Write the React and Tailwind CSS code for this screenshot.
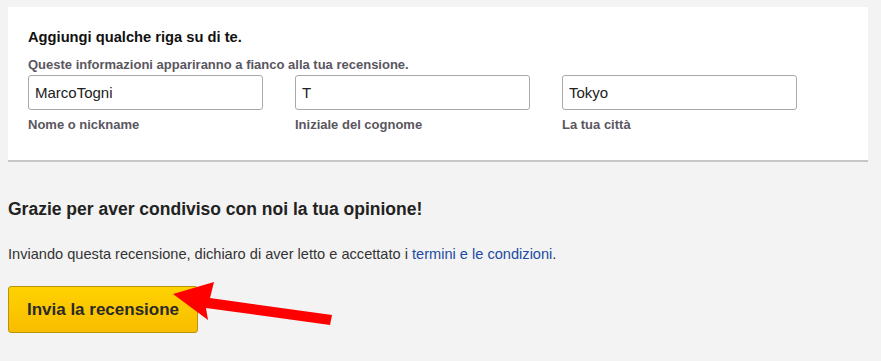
import React from 'react';

const fields = [
  { value: 'MarcoTogni', label: 'Nome o nickname' },
  { value: 'T', label: 'Iniziale del cognome' },
  { value: 'Tokyo', label: 'La tua città' },
];

const App = () => {
  return (
    <div className="relative min-h-[361px] bg-[#f3f3f3] px-2 pt-[7px] font-['Liberation_Sans',Arial,sans-serif]">
      {/* Card */}
      <div className="w-[860px] bg-white border-b-2 border-[#c6c6c6] pl-5 pt-[21px] pb-[27px]">
        <h2 className="text-[14.7px] leading-[18px] font-bold text-[#111]">Aggiungi qualche riga su di te.</h2>
        <p className="mt-[11px] text-[13px] leading-4 font-bold text-[#5a5660]">
          Queste informazioni appariranno a fianco alla tua recensione.
        </p>
        <div className="mt-[2px] flex gap-8">
          {fields.map((f, idx) => (
            <div key={idx} className="w-[235px]">
              <input
                defaultValue={f.value}
                className="h-[35px] w-full rounded-[3px] border border-[#a9a9a9] bg-white px-[6px] text-[15px] text-[#222] outline-none"
              />
              <div className="mt-[7px] text-[13px] leading-4 font-bold text-[#5a5660]">{f.label}</div>
            </div>
          ))}
        </div>
      </div>

      <h3 className="mt-[37px] text-[17.5px] leading-5 font-bold text-[#222]">
        Grazie per aver condiviso con noi la tua opinione!
      </h3>
      <p className="mt-[26px] text-[14.6px] leading-[18px] text-[#333]">
        Inviando questa recensione, dichiaro di aver letto e accettato i{' '}
        <a href="#" className="text-[#1d4ba3]">termini e le condizioni</a>.
      </p>

      <button className="mt-[23px] h-[47px] w-[190px] rounded-[3px] border border-[#b8940c] bg-gradient-to-b from-[#ffd200] to-[#f8bd00] text-[17px] font-bold text-[#2a2a2a]">
        Invia la recensione
      </button>

      {/* Red annotation arrow */}
      <svg className="absolute left-0 top-0" width="881" height="361" viewBox="0 0 881 361">
        <polygon
          points="173,294 214,282 210,298 332,315 330,325 206,308 208,320"
          fill="#ff0000"
        />
      </svg>
    </div>
  );
};

export default App;
